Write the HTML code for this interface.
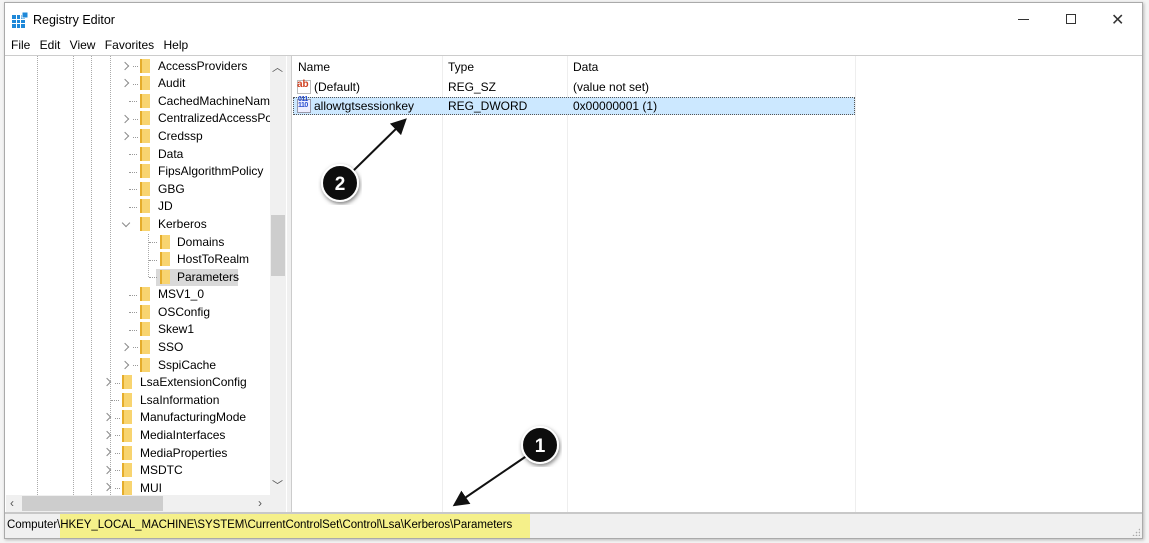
<!DOCTYPE html>
<html><head><meta charset="utf-8"><style>
*{margin:0;padding:0;box-sizing:border-box}
body{width:1149px;height:543px;background:#f4f4f4;position:relative;overflow:hidden;font-family:"Liberation Sans",sans-serif;font-size:12px;color:#000}
.win{position:absolute;left:4px;top:2px;width:1139px;height:537px;background:#fff;border:1px solid #aaa;box-shadow:1px 1px 3px rgba(0,0,0,.25)}
.a{position:absolute;white-space:nowrap}
.fold{position:absolute;width:10px;height:14px;background:#f8d470;border-left:2px solid #e5ad2c}
.chev{position:absolute;width:6px;height:6px;border-right:1.3px solid #888;border-top:1.3px solid #888;transform:rotate(45deg)}
.chevd{transform:rotate(135deg)}
.dot{position:absolute;border-top:1px dotted #999;width:8px}
.vl{position:absolute;border-left:1px dotted #aaa;top:56px;height:439px}
.t{position:absolute;white-space:nowrap;line-height:16px}
.col{position:absolute;top:56px;height:456px;border-left:1px solid #eee}
</style></head><body>
<div class="win"></div>
<svg class="a" style="left:12px;top:12px" width="16" height="16"><rect x="0" y="3" width="13" height="13" fill="#1e88d8"/><g stroke="#fff" stroke-width="1"><line x1="4.5" y1="3" x2="4.5" y2="16"/><line x1="8.5" y1="3" x2="8.5" y2="16"/><line x1="0" y1="7.5" x2="13" y2="7.5"/><line x1="0" y1="11.5" x2="13" y2="11.5"/></g><rect x="10" y="0" width="6" height="6" fill="#1e88d8" stroke="#fff"/></svg>
<div class="a" style="left:33px;top:13px;font-size:12.5px">Registry Editor</div>
<div class="a" style="left:1018px;top:19px;width:11px;border-top:1px solid #333"></div>
<div class="a" style="left:1066px;top:14px;width:10px;height:10px;border:1px solid #333"></div>
<div class="a" style="left:1111px;top:10px;font-size:16px;color:#333">✕</div>
<div class="a" style="left:11px;top:38px;word-spacing:6px">File Edit View Favorites Help</div>
<div class="a" style="left:5px;top:55px;width:1137px;border-top:1px solid #ccc"></div>
<div class="a" style="left:6px;top:56px;width:280px;height:456px;border-right:1px solid #ccc;overflow:hidden"></div>
<div class="vl" style="left:37px"></div><div class="vl" style="left:73px"></div><div class="vl" style="left:91px"></div><div class="vl" style="left:110px"></div>
<div class="a" style="left:287px;top:56px;width:4px;height:456px;background:#f0f0f0"></div>
<div class="chev" style="left:122px;top:63px"></div><div class="dot" style="left:133px;top:66px;width:5px"></div><div class="fold" style="left:140px;top:59px"></div><div class="t" style="left:158px;top:58px">AccessProviders</div>
<div class="chev" style="left:122px;top:80px"></div><div class="dot" style="left:133px;top:84px;width:5px"></div><div class="fold" style="left:140px;top:76px"></div><div class="t" style="left:158px;top:75px">Audit</div>
<div class="dot" style="left:129px;top:101px"></div><div class="fold" style="left:140px;top:94px"></div><div class="t" style="left:158px;top:93px">CachedMachineName</div>
<div class="chev" style="left:122px;top:116px"></div><div class="dot" style="left:133px;top:119px;width:5px"></div><div class="fold" style="left:140px;top:111px"></div><div class="t" style="left:158px;top:110px">CentralizedAccessPol</div>
<div class="chev" style="left:122px;top:133px"></div><div class="dot" style="left:133px;top:137px;width:5px"></div><div class="fold" style="left:140px;top:129px"></div><div class="t" style="left:158px;top:128px">Credssp</div>
<div class="dot" style="left:129px;top:154px"></div><div class="fold" style="left:140px;top:147px"></div><div class="t" style="left:158px;top:146px">Data</div>
<div class="dot" style="left:129px;top:172px"></div><div class="fold" style="left:140px;top:164px"></div><div class="t" style="left:158px;top:163px">FipsAlgorithmPolicy</div>
<div class="dot" style="left:129px;top:189px"></div><div class="fold" style="left:140px;top:182px"></div><div class="t" style="left:158px;top:181px">GBG</div>
<div class="dot" style="left:129px;top:207px"></div><div class="fold" style="left:140px;top:199px"></div><div class="t" style="left:158px;top:198px">JD</div>
<div class="chev chevd" style="left:123px;top:220px"></div><div class="fold" style="left:140px;top:217px"></div><div class="t" style="left:158px;top:216px">Kerberos</div>
<div class="a" style="left:148px;top:234px;height:43px;border-left:1px dotted #aaa"></div>
<div class="dot" style="left:149px;top:242px"></div><div class="fold" style="left:160px;top:235px"></div><div class="t" style="left:177px;top:234px">Domains</div>
<div class="dot" style="left:149px;top:260px"></div><div class="fold" style="left:160px;top:252px"></div><div class="t" style="left:177px;top:251px">HostToRealm</div>
<div class="a" style="left:156px;top:269px;width:82px;height:17px;background:#d9d9d9"></div>
<div class="dot" style="left:149px;top:277px"></div><div class="fold" style="left:160px;top:270px"></div><div class="t" style="left:177px;top:269px">Parameters</div>
<div class="dot" style="left:129px;top:295px"></div><div class="fold" style="left:140px;top:287px"></div><div class="t" style="left:158px;top:286px">MSV1_0</div>
<div class="dot" style="left:129px;top:312px"></div><div class="fold" style="left:140px;top:305px"></div><div class="t" style="left:158px;top:304px">OSConfig</div>
<div class="dot" style="left:129px;top:330px"></div><div class="fold" style="left:140px;top:322px"></div><div class="t" style="left:158px;top:321px">Skew1</div>
<div class="chev" style="left:122px;top:344px"></div><div class="dot" style="left:133px;top:347px;width:5px"></div><div class="fold" style="left:140px;top:340px"></div><div class="t" style="left:158px;top:339px">SSO</div>
<div class="chev" style="left:122px;top:362px"></div><div class="dot" style="left:133px;top:365px;width:5px"></div><div class="fold" style="left:140px;top:358px"></div><div class="t" style="left:158px;top:357px">SspiCache</div>
<div class="chev" style="left:104px;top:379px"></div><div class="dot" style="left:115px;top:383px;width:5px"></div><div class="fold" style="left:122px;top:375px"></div><div class="t" style="left:140px;top:374px">LsaExtensionConfig</div>
<div class="dot" style="left:111px;top:400px"></div><div class="fold" style="left:122px;top:393px"></div><div class="t" style="left:140px;top:392px">LsaInformation</div>
<div class="chev" style="left:104px;top:414px"></div><div class="dot" style="left:115px;top:418px;width:5px"></div><div class="fold" style="left:122px;top:410px"></div><div class="t" style="left:140px;top:409px">ManufacturingMode</div>
<div class="chev" style="left:104px;top:432px"></div><div class="dot" style="left:115px;top:435px;width:5px"></div><div class="fold" style="left:122px;top:428px"></div><div class="t" style="left:140px;top:427px">MediaInterfaces</div>
<div class="chev" style="left:104px;top:449px"></div><div class="dot" style="left:115px;top:453px;width:5px"></div><div class="fold" style="left:122px;top:446px"></div><div class="t" style="left:140px;top:445px">MediaProperties</div>
<div class="chev" style="left:104px;top:467px"></div><div class="dot" style="left:115px;top:470px;width:5px"></div><div class="fold" style="left:122px;top:463px"></div><div class="t" style="left:140px;top:462px">MSDTC</div>
<div class="chev" style="left:104px;top:484px"></div><div class="dot" style="left:115px;top:488px;width:5px"></div><div class="fold" style="left:122px;top:481px"></div><div class="t" style="left:140px;top:480px">MUI</div>
<div class="a" style="left:270px;top:56px;width:16px;height:439px;background:#f0f0f0"></div>
<div class="a" style="left:271px;top:215px;width:14px;height:61px;background:#cdcdcd"></div>
<div class="a" style="left:272px;top:59px;color:#555;font-size:11px">︿</div>
<div class="a" style="left:272px;top:477px;color:#555;font-size:11px">﹀</div>
<div class="a" style="left:6px;top:495px;width:280px;height:17px;background:#f0f0f0"></div>
<div class="a" style="left:22px;top:496px;width:141px;height:15px;background:#cdcdcd"></div>
<div class="a" style="left:10px;top:496px;color:#555;font-size:12px">‹</div>
<div class="a" style="left:258px;top:496px;color:#555;font-size:12px">›</div>
<div class="a" style="left:291px;top:56px;width:851px;height:456px;border-left:1px solid #ccc"></div>
<div class="col" style="left:442px"></div><div class="col" style="left:567px"></div><div class="col" style="left:855px"></div>
<div class="t" style="left:298px;top:59px">Name</div><div class="t" style="left:448px;top:59px">Type</div><div class="t" style="left:573px;top:59px">Data</div>
<div class="a" style="left:297px;top:80px;width:14px;height:14px;border:1px solid #bbb;background:#fff"></div>
<div class="a" style="left:297px;top:79px;font-size:10px;font-weight:bold;color:#d04020">ab</div>
<div class="t" style="left:314px;top:79px">(Default)</div><div class="t" style="left:448px;top:79px">REG_SZ</div><div class="t" style="left:573px;top:79px">(value not set)</div>
<div class="a" style="left:293px;top:97px;width:562px;height:18px;background:#cce8ff;border:1px dotted #555"></div>
<div class="a" style="left:297px;top:99px;width:14px;height:14px;border:1px solid #99a;background:#eef"></div>
<div class="a" style="left:298px;top:97px;font-size:7px;line-height:6px;font-weight:bold;color:#2b4fd0;letter-spacing:-.5px">011<br>110</div>
<div class="t" style="left:314px;top:98px">allowtgtsessionkey</div><div class="t" style="left:448px;top:98px">REG_DWORD</div><div class="t" style="left:573px;top:98px">0x00000001 (1)</div>
<div class="a" style="left:5px;top:512px;width:1137px;height:26px;background:#f0f0f0;border-top:2px solid #c8c8c8"></div>
<div class="a" style="left:60px;top:514px;width:470px;height:24px;background:#f5f08a"></div>
<div class="a" style="left:7px;top:519px;font-size:11.5px;letter-spacing:-0.05px">Computer\HKEY_LOCAL_MACHINE\SYSTEM\CurrentControlSet\Control\Lsa\Kerberos\Parameters</div>
<div class="a" style="left:1132px;top:528px;width:8px;height:8px;background:radial-gradient(#aaa 35%,transparent 40%) 0 0/3px 3px;clip-path:polygon(100% 0,100% 100%,0 100%)"></div>
<svg class="a" style="left:0;top:0" width="1149" height="543">
<defs><marker id="m" markerWidth="8" markerHeight="8" refX="6" refY="4" orient="auto"><path d="M0,0 L8,4 L0,8 z" fill="#111"/></marker>
<filter id="s"><feDropShadow dx="1" dy="2" stdDeviation="2" flood-opacity=".5"/></filter></defs>
<line x1="352" y1="172" x2="404" y2="121" stroke="#111" stroke-width="2" marker-end="url(#m)"/>
<line x1="528" y1="455" x2="456" y2="504" stroke="#111" stroke-width="2" marker-end="url(#m)"/>
<circle cx="340" cy="183" r="18" fill="#111" stroke="#fff" stroke-width="2" filter="url(#s)"/>
<circle cx="540" cy="445" r="18" fill="#111" stroke="#fff" stroke-width="2" filter="url(#s)"/>
<text x="340" y="190" fill="#fff" font-family="Liberation Sans" font-weight="bold" font-size="19" text-anchor="middle">2</text>
<text x="540" y="452" fill="#fff" font-family="Liberation Sans" font-weight="bold" font-size="19" text-anchor="middle">1</text>
</svg>
</body></html>
